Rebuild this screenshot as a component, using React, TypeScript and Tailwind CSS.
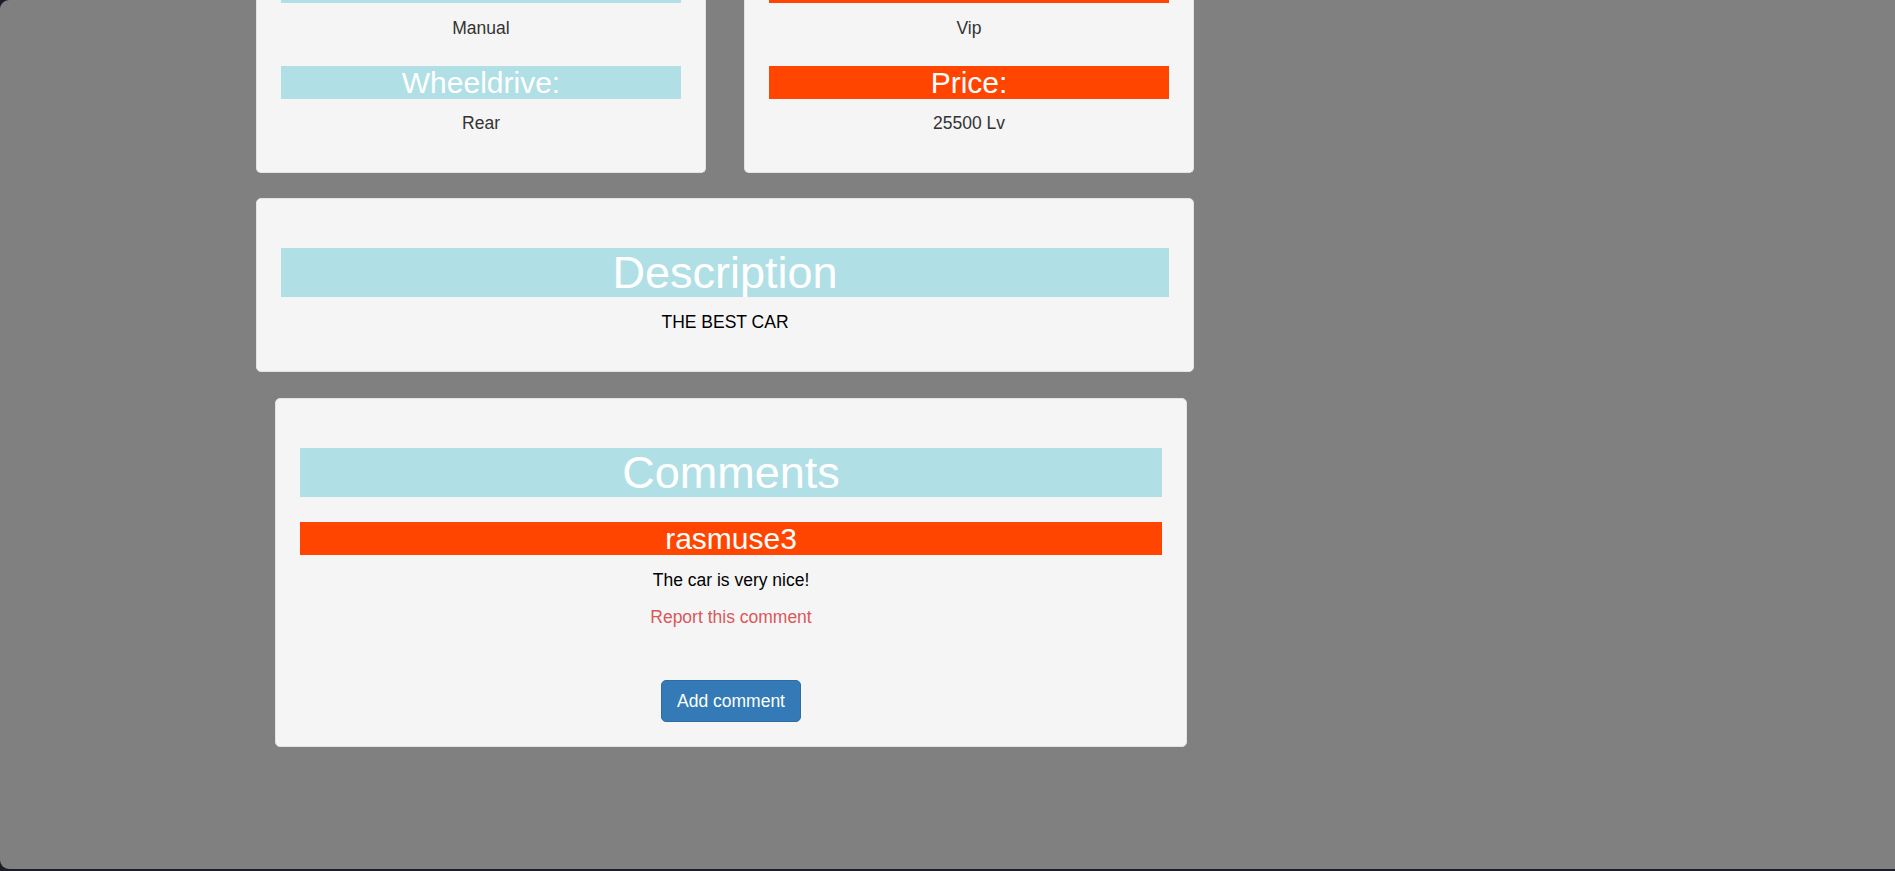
export default function App() {
  return (
    // window frame
    <div className="h-[871px] w-full bg-[#1c1c28] font-['Liberation_Sans',Arial,sans-serif] text-[17.5px] text-[#333]">
      <div className="h-[869px] w-full overflow-hidden rounded-l-[9px] bg-[#808080]">
        <div className="ml-[256px] flex w-[938px] flex-col">
          {/* top cards, scrolled past their top */}
          <div className="flex gap-[38px]">
            <div className="w-[450px] rounded-b-[5px] border-x border-b border-[#e3e3e3] bg-[#f5f5f5] px-[24px] pb-[36px] text-center">
              <div className="h-[3px] bg-[#b0e0e6]" />
              <p className="mt-[12.5px] leading-[25px]">Manual</p>
              <h3 className="mt-[25px] h-[33px] bg-[#b0e0e6] text-[30px] leading-[33px] text-white">Wheeldrive:</h3>
              <p className="mt-[12.5px] leading-[25px]">Rear</p>
            </div>
            <div className="w-[450px] rounded-b-[5px] border-x border-b border-[#e3e3e3] bg-[#f5f5f5] px-[24px] pb-[36px] text-center">
              <div className="h-[3px] bg-[#ff4500]" />
              <p className="mt-[12.5px] leading-[25px]">Vip</p>
              <h3 className="mt-[25px] h-[33px] bg-[#ff4500] text-[30px] leading-[33px] text-white">Price:</h3>
              <p className="mt-[12.5px] leading-[25px]">25500 Lv</p>
            </div>
          </div>

          {/* description */}
          <div className="mt-[25px] rounded-[5px] border border-[#e3e3e3] bg-[#f5f5f5] px-[24px] pt-[24px] pb-[36px] text-center">
            <h1 className="mt-[25px] h-[49px] bg-[#b0e0e6] text-[45px] leading-[49px] text-white">Description</h1>
            <p className="mt-[12.5px] leading-[25px] text-black">THE BEST CAR</p>
          </div>

          {/* comments */}
          <div className="mt-[26px] ml-[19px] w-[912px] rounded-[5px] border border-[#e3e3e3] bg-[#f5f5f5] px-[24px] pt-[24px] pb-[24px] text-center">
            <h1 className="mt-[25px] h-[49px] bg-[#b0e0e6] text-[45px] leading-[49px] text-white">Comments</h1>
            <h3 className="mt-[25px] h-[33px] bg-[#ff4500] text-[30px] leading-[33px] text-white">rasmuse3</h3>
            <p className="mt-[13px] leading-[25px] text-black">The car is very nice!</p>
            <p className="mt-[12.5px] leading-[25px] text-[#d9585c]">Report this comment</p>
            <button className="mt-[50px] h-[42px] w-[140px] rounded-[5px] border border-[#2e6da4] bg-[#337ab7] text-[17.5px] text-white">
              Add comment
            </button>
          </div>
        </div>
      </div>
    </div>
  );
}
